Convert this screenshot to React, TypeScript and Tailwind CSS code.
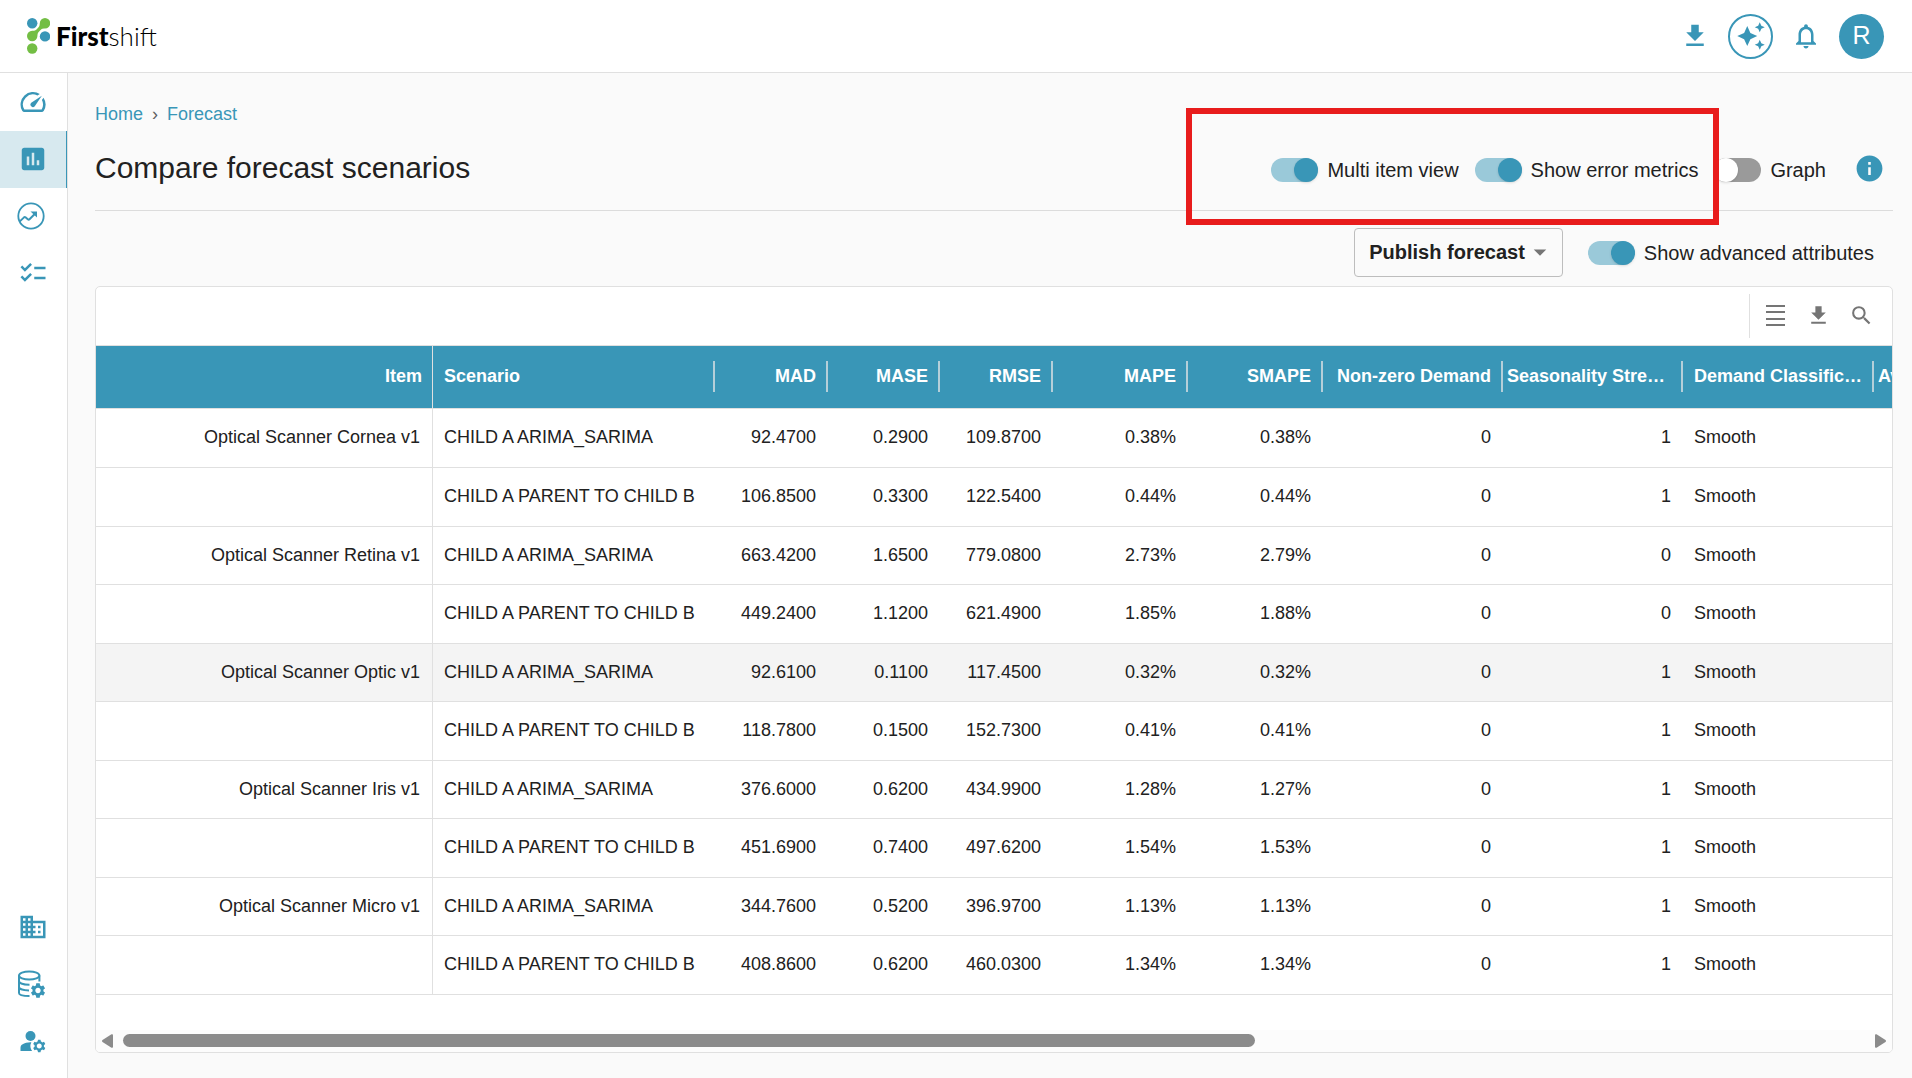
import React from 'react';
import {
    MdArrowDropDown,
    MdAssessment,
    MdAutoAwesome,
    MdBusiness,
    MdChecklist,
    MdGetApp,
    MdInfo,
    MdManageAccounts,
    MdNotificationsNone,
    MdSearch,
    MdSettings,
    MdSpeed,
} from 'react-icons/md';
import {clsx} from 'clsx';

interface NavItem {
    label: string;
    icon: React.ReactNode;
    active?: boolean;
}

interface Column {
    title: string;
    width: number;
    numeric?: boolean;
    tight?: boolean;
}

const TrendIcon = () => (
    <svg viewBox="0 0 30 30" className="mr-1 size-[30px]" fill="none" stroke="currentColor" aria-hidden="true">
        <circle cx="15" cy="15" r="12.7" strokeWidth="1.8"/>
        <path d="M3.6 20.6 8 16.4c.5-.4 1-.4 1.5-.1l2.300 2c.6.5 1.200.5 1.700 0l5.500-5.500" strokeWidth="2"/>
        <path d="M14.500 10.500h6.500v6z" fill="currentColor" stroke="none"/>
    </svg>
);

const DatabaseIcon = () => (
    <svg viewBox="0 0 30 30" className="mr-0.5 size-[30px]" fill="none" stroke="currentColor" strokeWidth="2" aria-hidden="true">
        <ellipse cx="12.2" cy="6.5" rx="10.2" ry="4"/>
        <path d="M2 6.5V24c0 1.800 4 3 10.500 3M22.400 6.500V12.500"/>
        <path d="M2 12c0 2.200 4.500 3.800 10.500 3.800M2 18c0 2 4.500 3.400 10 3.400"/>
        <MdSettings x={12} y={12.5} size={18} stroke="none"/>
    </svg>
);

const LinesIcon = () => (
    <svg viewBox="0 0 25 25" className="size-[25px]" fill="currentColor" aria-hidden="true">
        <path d="M3 2h19v2H3zM3 8h19v2H3zM3 15h19v2H3zM3 21h19v2H3z"/>
    </svg>
);

const mainNav: NavItem[] = [
    {label: 'Dashboard', icon: <MdSpeed size={30}/>},
    {label: 'Forecast', icon: <MdAssessment size={30}/>, active: true},
    {label: 'Trends', icon: <TrendIcon/>},
    {label: 'Tasks', icon: <MdChecklist size={30}/>},
];

const adminNav: NavItem[] = [
    {label: 'Company', icon: <MdBusiness size={30}/>},
    {label: 'Data settings', icon: <DatabaseIcon/>},
    {label: 'User settings', icon: <MdManageAccounts size={30}/>},
];

const columns: Column[] = [
    {title: 'Item', width: 337, numeric: true},
    {title: 'Scenario', width: 282},
    {title: 'MAD', width: 113, numeric: true},
    {title: 'MASE', width: 112, numeric: true},
    {title: 'RMSE', width: 113, numeric: true},
    {title: 'MAPE', width: 135, numeric: true},
    {title: 'SMAPE', width: 135, numeric: true},
    {title: 'Non-zero Demand', width: 180, numeric: true},
    {title: 'Seasonality Strength', width: 180, numeric: true, tight: true},
    {title: 'Demand Classification', width: 191},
    {title: 'Average Interval', width: 180, numeric: true, tight: true},
];

const ARIMA = 'CHILD A ARIMA_SARIMA';
const PARENT = 'CHILD A PARENT TO CHILD B';

const rows: string[][] = [
    ['Optical Scanner Cornea v1', ARIMA, '92.4700', '0.2900', '109.8700', '0.38%', '0.38%', '0', '1', 'Smooth'],
    ['', PARENT, '106.8500', '0.3300', '122.5400', '0.44%', '0.44%', '0', '1', 'Smooth'],
    ['Optical Scanner Retina v1', ARIMA, '663.4200', '1.6500', '779.0800', '2.73%', '2.79%', '0', '0', 'Smooth'],
    ['', PARENT, '449.2400', '1.1200', '621.4900', '1.85%', '1.88%', '0', '0', 'Smooth'],
    ['Optical Scanner Optic v1', ARIMA, '92.6100', '0.1100', '117.4500', '0.32%', '0.32%', '0', '1', 'Smooth'],
    ['', PARENT, '118.7800', '0.1500', '152.7300', '0.41%', '0.41%', '0', '1', 'Smooth'],
    ['Optical Scanner Iris v1', ARIMA, '376.6000', '0.6200', '434.9900', '1.28%', '1.27%', '0', '1', 'Smooth'],
    ['', PARENT, '451.6900', '0.7400', '497.6200', '1.54%', '1.53%', '0', '1', 'Smooth'],
    ['Optical Scanner Micro v1', ARIMA, '344.7600', '0.5200', '396.9700', '1.13%', '1.13%', '0', '1', 'Smooth'],
    ['', PARENT, '408.8600', '0.6200', '460.0300', '1.34%', '1.34%', '0', '1', 'Smooth'],
];

const highlightedRow = 4;

function Logo() {
    return (
        <a href="#" className="flex items-center gap-1.5" aria-label="Firstshift">
            <svg viewBox="0 0 23 36" className="h-9 w-[23px]" aria-hidden="true">
                <path
                    d="M18 0a5.200 5.200 0 0 1 0 10.400c-3.500 0-3.800.8-5 2.200-1.800 2-2.300 2-2.600 5.400A5.200 5.200 0 1 1 5.200 12.800c3 0 4-.8 5.200-2.300 1.500-1.800 2.200-2 2.400-5.300A5.200 5.200 0 0 1 18 0z"
                    fill="#73be44"
                />
                <circle cx="5.2" cy="5.2" r="5.2" fill="#3996b7"/>
                <circle cx="18" cy="18.4" r="5.2" fill="#3996b7"/>
                <circle cx="5.2" cy="30.5" r="5.2" fill="#73be44"/>
            </svg>
            <span className="font-[Lato,sans-serif] text-[26px] leading-9 text-black">
                <span className="font-black">First</span>
                <span className="font-light">shift</span>
            </span>
        </a>
    );
}

function NavList({items}: { items: NavItem[] }) {
    return (
        <ul>
            {items.map((item) => (
                <li key={item.label}>
                    <a
                        href="#"
                        aria-label={item.label}
                        aria-current={item.active ? 'page' : undefined}
                        className={clsx(
                            'flex h-[57px] items-center justify-center border-r pb-px',
                            item.active ? 'border-[#3996b7] bg-[#d7e9ef]' : 'border-transparent'
                        )}
                    >
                        {item.icon}
                    </a>
                </li>
            ))}
        </ul>
    );
}

function Toggle({label, defaultChecked = false}: { label: string; defaultChecked?: boolean }) {
    return (
        <label className="flex items-center gap-[9px] text-xl leading-[30px] whitespace-nowrap">
            <input
                type="checkbox"
                role="switch"
                defaultChecked={defaultChecked}
                className="h-6 w-[47px] shrink-0 appearance-none rounded-full bg-[#9a9a9a] before:block before:size-6 before:rounded-full before:bg-white before:shadow before:content-[''] checked:bg-[#9ac9d9] checked:before:ml-[23px] checked:before:bg-[#3996b7]"
            />
            {label}
        </label>
    );
}

function ScenarioTable() {
    return (
        <div className="overflow-hidden">
            <table className="w-[1958px] table-fixed border-separate border-spacing-0 text-lg leading-6">
                <colgroup>
                    {columns.map((column) => (
                        <col key={column.title} style={{width: column.width}}/>
                    ))}
                </colgroup>
                <thead>
                    <tr className="h-[63px] bg-[#3996b7] text-white">
                        {columns.map((column, index) => (
                            <th
                                key={column.title}
                                scope="col"
                                className={clsx(
                                    'border-b border-[#e0e0e0] p-0 pb-0.5 font-bold',
                                    index === 0 && 'border-r'
                                )}
                            >
                                <div
                                    className={clsx(
                                        'flex h-[31px] items-center',
                                        column.tight ? 'pl-1' : 'pl-[11px]',
                                        column.numeric ? 'pr-[10px]' : 'pr-1',
                                        column.numeric && !column.tight && 'justify-end',
                                        index > 0 && 'border-r-2 border-[#b5cfd9]'
                                    )}
                                >
                                    <span className="truncate">{column.title}</span>
                                </div>
                            </th>
                        ))}
                    </tr>
                </thead>
                <tbody>
                    {rows.map((row, rowIndex) => (
                        <tr
                            key={rowIndex}
                            className={clsx(
                                'h-[58px] first:h-[59px] even:h-[59px]',
                                rowIndex === highlightedRow && 'bg-[#f4f4f4]'
                            )}
                        >
                            {columns.map((column, index) => (
                                <td
                                    key={column.title}
                                    className={clsx(
                                        'truncate border-b border-[#e0e0e0] pt-0 pb-0.5',
                                        column.numeric ? 'pr-3 pl-1 text-right' : 'pr-3 pl-[11px]',
                                        index === 0 && 'border-r'
                                    )}
                                >
                                    {row[index]}
                                </td>
                            ))}
                        </tr>
                    ))}
                </tbody>
            </table>
        </div>
    );
}

export default function App() {
    return (
        <div className="flex min-h-screen flex-col bg-[#fafafa] font-['Liberation_Sans',Arial,sans-serif] text-[#212121]">
            <header className="flex h-[73px] items-center justify-between border-b border-[#e0e0e0] bg-white pr-7 pl-[27px]">
                <Logo/>
                <div className="flex items-center gap-[18px] text-[#3996b7]">
                    <button type="button" aria-label="Downloads">
                        <MdGetApp size={30}/>
                    </button>
                    <button
                        type="button"
                        aria-label="Assistant"
                        className="flex size-[45px] items-center justify-center rounded-full border-2 border-[#3996b7]"
                    >
                        <MdAutoAwesome size={30}/>
                    </button>
                    <button type="button" aria-label="Notifications">
                        <MdNotificationsNone size={30}/>
                    </button>
                    <button
                        type="button"
                        aria-label="Account"
                        className="size-[45px] rounded-full bg-[#3996b7] pb-0.5 text-[25px] leading-none text-white"
                    >
                        R
                    </button>
                </div>
            </header>

            <div className="flex flex-1">
                <nav
                    aria-label="Main"
                    className="flex w-[68px] shrink-0 flex-col justify-between border-r border-[#e0e0e0] bg-white pt-px pb-2 text-[#3996b7]"
                >
                    <NavList items={mainNav}/>
                    <NavList items={adminNav}/>
                </nav>

                <main className="flex min-w-0 flex-1 flex-col pt-[29px] pr-[19px] pb-[25px] pl-[27px]">
                    <nav aria-label="Breadcrumb" className="flex gap-[9px] text-lg leading-6">
                        <a href="#" className="text-[#3996b7]">Home</a>
                        <span className="text-[#616161]">›</span>
                        <a href="#" className="text-[#3996b7]">Forecast</a>
                    </nav>

                    <div className="flex h-[85px] items-center justify-between border-b border-[#dcdcdc] pr-2">
                        <h1 className="text-[30px] leading-10">Compare forecast scenarios</h1>
                        <div className="flex items-center">
                            <div className="flex items-center gap-4 pt-1">
                                <div className="relative flex gap-4">
                                    <Toggle label="Multi item view" defaultChecked/>
                                    <Toggle label="Show error metrics" defaultChecked/>
                                    <div
                                        className="pointer-events-none absolute -top-[47px] -right-[21px] -bottom-10 -left-[85px] z-10 border-6 border-[#e81c1c]"
                                        aria-hidden="true"
                                    />
                                </div>
                                <Toggle label="Graph"/>
                            </div>
                            <button type="button" aria-label="Information" className="ml-7 text-[#3996b7]">
                                <MdInfo size={31}/>
                            </button>
                        </div>
                    </div>

                    <div className="flex items-center justify-end gap-[25px] pt-[17px] pr-[19px] pb-[9px]">
                        <button
                            type="button"
                            className="flex h-[49px] items-center rounded border border-[#bdbdbd] pr-[7px] pb-0.5 pl-[14px] text-xl font-bold"
                        >
                            Publish forecast
                            <MdArrowDropDown size={30} className="text-[#757575]"/>
                        </button>
                        <Toggle label="Show advanced attributes" defaultChecked/>
                    </div>

                    <section
                        aria-label="Scenario comparison"
                        className="flex flex-1 flex-col overflow-hidden rounded-[5px] border border-[#e0e0e0] bg-white"
                    >
                        <div className="flex h-[59px] items-center justify-end border-b border-[#e0e0e0] pr-[18px] text-[#757575]">
                            <div className="flex h-11 items-center gap-[18px] border-l border-[#e0e0e0] pb-0.5 pl-[13px]">
                                <button type="button" aria-label="Row density">
                                    <LinesIcon/>
                                </button>
                                <button type="button" aria-label="Export">
                                    <MdGetApp size={25}/>
                                </button>
                                <button type="button" aria-label="Search">
                                    <MdSearch size={25}/>
                                </button>
                            </div>
                        </div>

                        <ScenarioTable/>

                        <div className="mt-auto flex h-[22px] items-center gap-[10px] bg-[#fcfcfc] px-1.5 pb-px text-[#8b8b8b]">
                            <svg viewBox="0 0 11 14" className="h-[14px] w-[11px]" fill="currentColor" aria-hidden="true">
                                <path d="M9.500.3Q11-.3 11 1.200v11.600q0 1.500-1.500.9L.5 8q-1-1 0-2z"/>
                            </svg>
                            <div className="flex-1">
                                <div className="h-[13px] w-[65%] rounded-full bg-[#8b8b8b]"/>
                            </div>
                            <svg viewBox="0 0 11 14" className="h-[14px] w-[11px]" fill="currentColor" aria-hidden="true">
                                <path d="M1.500.3Q0-.3 0 1.200v11.600q0 1.500 1.500.9L10.500 8q1-1 0-2z"/>
                            </svg>
                        </div>
                    </section>
                </main>
            </div>
        </div>
    );
}
